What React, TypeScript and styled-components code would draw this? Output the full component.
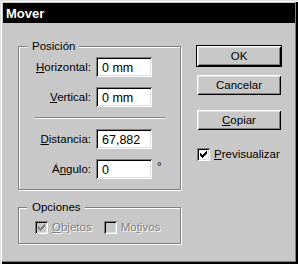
import React from 'react';
import styled, { createGlobalStyle } from 'styled-components';

const FACE = '#c8c8c8';

const Global = createGlobalStyle`
  html, body { margin: 0; padding: 0; background: ${FACE}; }
  body {
    font-family: "Liberation Sans", Arial, sans-serif;
    font-size: 11.5px;
    color: #000;
  }
`;

const Window = styled.div`
  width: 298px;
  height: 264px;
  box-sizing: border-box;
  padding: 3px;
  background: ${FACE};
  box-shadow: inset 1px 1px 0 #dfdfdf, inset 2px 2px 0 #fff, inset -2px -2px 0 #000,
    inset -3px -3px 0 #808080;
  display: flex;
  flex-direction: column;
`;

const TitleBar = styled.div`
  height: 20px;
  background: #000;
  color: #fff;
  font-weight: bold;
  font-size: 13px;
  display: flex;
  align-items: center;
  padding-left: 3px;
  padding-top: 1px;
  box-sizing: border-box;
`;

const Body = styled.div`
  display: flex;
  gap: 16px;
  padding: 23px 0 0 15px;
`;

const LeftCol = styled.div`
  display: flex;
  flex-direction: column;
  width: 163px;
`;

const GroupBox = styled.div<{ $gap?: number }>`
  position: relative;
  box-sizing: border-box;
  width: 163px;
  margin-top: ${(p) => p.$gap ?? 0}px;
  border: 1px solid #808080;
  box-shadow: inset 1px 1px 0 #fff, 1px 1px 0 #fff;
`;

const Legend = styled.span`
  position: absolute;
  left: 8px;
  top: -8px;
  padding: 0 4px 0 5px;
  background: ${FACE};
  line-height: 14px;
`;

const PosGrid = styled.div`
  display: grid;
  grid-template-columns: 72px 56px auto;
  grid-template-rows: 20px 20px 2px 20px 20px;
  column-gap: 5px;
  row-gap: 10px;
  padding: 10px 0;
  align-items: center;
`;

const Label = styled.label`
  text-align: right;
  white-space: nowrap;
`;

const Field = styled.input`
  width: 56px;
  height: 20px;
  box-sizing: border-box;
  border: none;
  outline: none;
  margin: 0;
  padding: 1px 2px 0 6px;
  background: #fff;
  color: #000;
  font-family: "Liberation Sans", Arial, sans-serif;
  font-size: 12.5px;
  box-shadow: inset 1px 1px 0 #808080, inset -1px -1px 0 #fff, inset 2px 2px 0 #000,
    inset -2px -2px 0 #dfdfdf;
`;

const Separator = styled.div`
  grid-column: 1 / -1;
  align-self: start;
  height: 0;
  width: 130px;
  margin-left: 16px;
  border-top: 1px solid #808080;
  border-bottom: 1px solid #fff;
`;

const Unit = styled.span`
  align-self: start;
  margin-top: 1px;
`;

const OptionsRow = styled.div`
  display: flex;
  gap: 12px;
  padding: 13px 0 9px 16px;
`;

const CheckRow = styled.div<{ $gap?: number }>`
  display: flex;
  align-items: center;
  gap: 4px;
  height: 13px;
  margin-top: ${(p) => p.$gap ?? 0}px;
  white-space: nowrap;
`;

const CheckBox = styled.span<{ $disabled?: boolean }>`
  width: 13px;
  height: 13px;
  flex: none;
  box-sizing: border-box;
  background: ${(p) => (p.$disabled ? FACE : '#fff')};
  box-shadow: inset 1px 1px 0 #808080, inset -1px -1px 0 #fff, inset 2px 2px 0 #000,
    inset -2px -2px 0 #dfdfdf;
  display: flex;
  svg { display: block; }
`;

const CheckText = styled.span<{ $disabled?: boolean }>`
  color: ${(p) => (p.$disabled ? '#808080' : '#000')};
  text-shadow: ${(p) => (p.$disabled ? '1px 1px 0 #fff' : 'none')};
  line-height: 13px;
`;

const RightCol = styled.div`
  display: flex;
  flex-direction: column;
  width: 84px;
`;

const Button = styled.button<{ $default?: boolean; $gap?: number }>`
  width: 84px;
  height: 20px;
  margin: ${(p) => p.$gap ?? 0}px 0 0 0;
  padding: 0;
  border: none;
  background: ${FACE};
  color: #000;
  font-family: "Liberation Sans", Arial, sans-serif;
  font-size: 11.5px;
  box-shadow: ${(p) => (p.$default ? '0 0 0 1px #000, ' : '')}inset 1px 1px 0 #fff,
    inset -1px -1px 0 #000, inset 2px 2px 0 #dfdfdf, inset -2px -2px 0 #808080;
  cursor: default;
`;

const CheckMark = ({ color }: { color: string }) => {
  const cols = [2, 3, 4, 3, 2, 1, 0];
  return (
    <svg width="13" height="13" viewBox="0 0 13 13" shapeRendering="crispEdges">
      {cols.map((y, i) => (
        <rect key={i} x={3 + i} y={3 + y} width={1} height={3} fill={color} />
      ))}
    </svg>
  );
};

const Check = ({
  label,
  checked,
  disabled,
  gap,
}: {
  label: React.ReactNode;
  checked?: boolean;
  disabled?: boolean;
  gap?: number;
}) => (
  <CheckRow $gap={gap}>
    <CheckBox $disabled={disabled}>
      {checked && <CheckMark color={disabled ? '#808080' : '#000'} />}
    </CheckBox>
    <CheckText $disabled={disabled}>{label}</CheckText>
  </CheckRow>
);

export default function App() {
  return (
    <>
      <Global />
      <Window>
        <TitleBar>Mover</TitleBar>
        <Body>
          <LeftCol>
            <GroupBox>
              <Legend>Posición</Legend>
              <PosGrid>
                <Label>
                  <u>H</u>orizontal:
                </Label>
                <Field readOnly value="0 mm" />
                <span />
                <Label>
                  <u>V</u>ertical:
                </Label>
                <Field readOnly value="0 mm" />
                <span />
                <Separator />
                <Label>
                  <u>D</u>istancia:
                </Label>
                <Field readOnly value="67,882" />
                <span />
                <Label>
                  Á<u>n</u>gulo:
                </Label>
                <Field readOnly value="0" />
                <Unit>°</Unit>
              </PosGrid>
            </GroupBox>
            <GroupBox $gap={17}>
              <Legend>Opciones</Legend>
              <OptionsRow>
                <Check
                  disabled
                  checked
                  label={
                    <>
                      <u>O</u>bjetos
                    </>
                  }
                />
                <Check
                  disabled
                  label={
                    <>
                      Mo<u>t</u>ivos
                    </>
                  }
                />
              </OptionsRow>
            </GroupBox>
          </LeftCol>
          <RightCol>
            <Button $default>OK</Button>
            <Button $gap={9}>Cancelar</Button>
            <Button $gap={15}>
              <u>C</u>opiar
            </Button>
            <Check
              gap={18}
              checked
              label={
                <>
                  <u>P</u>revisualizar
                </>
              }
            />
          </RightCol>
        </Body>
      </Window>
    </>
  );
}
